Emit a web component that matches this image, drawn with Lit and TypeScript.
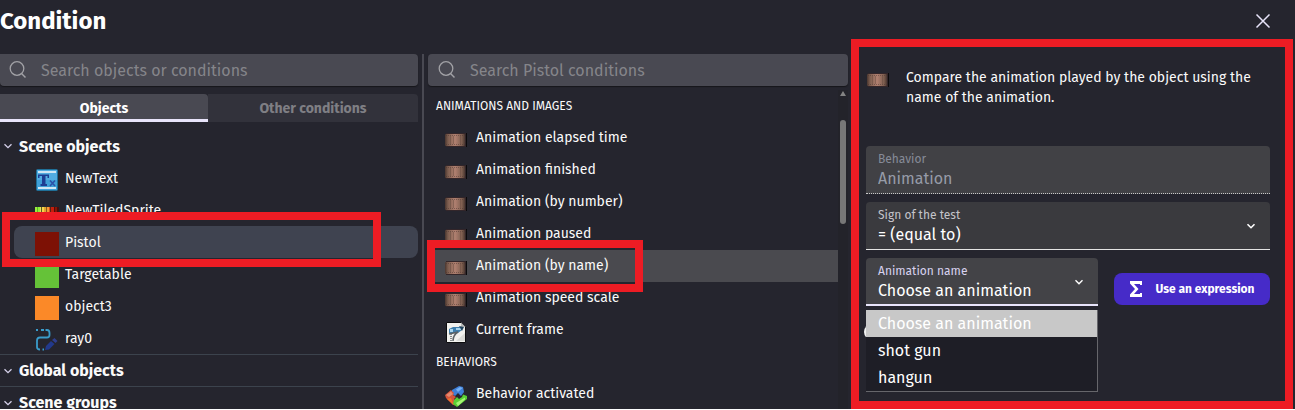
import { LitElement, html, css, svg, nothing } from "lit";
import { customElement, property, state } from "lit/decorators.js";
import { classMap } from "lit/directives/class-map.js";

const filmIcon = html`<svg width="24" height="24" viewBox="0 0 24 24" aria-hidden="true">
  <defs>
    <linearGradient id="film" x1="0" x2="1">
      <stop offset="0" stop-color="#4a362f" />
      <stop offset=".15" stop-color="#7d5e4f" />
      <stop offset=".5" stop-color="#b08070" />
      <stop offset=".85" stop-color="#7d5e4f" />
      <stop offset="1" stop-color="#49362f" />
    </linearGradient>
  </defs>
  <rect x="20" y="5" width="3" height="14" fill="#0b0a0b" />
  <path d="M2 5H22V19H2Z" fill="#33262a" />
  <rect x="1" y="6" width="20" height="12" rx="1" fill="url(#film)" />
  <path d="M2 7.500H21M2 16.500H21" stroke="#4c3430" stroke-width="1" stroke-dasharray="1 1" opacity=".5" fill="none" />
  <path d="M6.500 8V16M16.500 8V16M9.500 8V16" stroke="#5f453b" stroke-width="1" opacity=".4" />
</svg>`;

const frameIcon = html`<svg width="24" height="24" viewBox="0 0 24 24" aria-hidden="true">
  <path d="M2.500 2.500H17L21.500 7V22.500H2.500Z" fill="#f1f1ee" stroke="#0c0c0e" />
  <path d="M17 2.500V7H21.500Z" fill="#b9bab9" />
  <path d="M5 9L9 7H18V10L14 13H5Z" fill="#3f7fae" />
  <path d="M6 9H9V12H6ZM12 8H17V10H12Z" fill="#a8d5ee" />
  <path d="M15 6L20 7L18 11Z" fill="#23455f" />
  <path d="M5 14L14 12Q9 15 9 21" fill="none" stroke="#5b6266" stroke-width="1.500" />
  <path d="M7 14V22" stroke="#85898a" stroke-dasharray="1 1" stroke-width="2" />
  <path d="M12 21L21 13V21Z" fill="#d9dad7" />
</svg>`;

const puzzleIcon = html`<svg width="24" height="24" viewBox="0 0 24 24" aria-hidden="true">
  <path d="M8 6L15 2L19 3L20 8L17 12L14 9L11 12L8 10Z" fill="#3f7fd8" />
  <path d="M12 5.500L16 3L18.500 4L14 8Z" fill="#76b1f3" />
  <path d="M1 11L7 6L10 9L9 11L12 13L10 15L12 18L9 21L2 14Z" fill="#d5553d" />
  <path d="M2 11L7 7.500L9 10L5 13Z" fill="#e38a70" />
  <path d="M3 15L7 14L9 19L11 22Z" fill="#f2732b" />
  <path d="M10 16L13 13L15 15L18 13L19 10.500L23 12V15L13 23L9 20Z" fill="#57cf35" />
  <path d="M12 19L21 13.500V15.500L14 22Z" fill="#a6f474" />
</svg>`;

const textIcon = html`<svg width="24" height="24" viewBox="0 0 24 24" aria-hidden="true">
  <rect x="1.500" y="1.500" width="21" height="21" rx="1" fill="#3fa0d8" stroke="#1f6f97" />
  <path d="M2 2H22V12H2Z" fill="#63b7e9" opacity=".5" />
  <path d="M3 4H21M3 20H21" stroke="#cfe6f3" stroke-width="2" />
  <path d="M3 6.500H14V10H12.500V8H10.500V16H12V18H5.500V16H7V8H4.500V10H3Z" fill="#1d3e92" />
  <path d="M15 12.500L20 18M20 12.500L15 18" stroke="#2c51a8" stroke-width="1.600" />
</svg>`;

const stripes: [string, number][] = [
  ["#9bf03c", 2], ["#62b928", 1], ["#8ff03a", 2], ["#e9e05a", 1], ["#5e5a26", 1], ["#f5d64a", 2],
  ["#e3a532", 2], ["#8d5a1e", 1], ["#f79a33", 2], ["#d9531f", 1], ["#5a1f12", 1], ["#c41f0d", 3],
  ["#4e0f0b", 1], ["#8c1407", 2], ["#4a0f0c", 2],
];

const tiledIcon = html`<svg width="24" height="24" viewBox="0 0 24 24" shape-rendering="crispEdges" aria-hidden="true">
  ${stripes.map(([c, w], i) => {
    const x = stripes.slice(0, i).reduce((a, s) => a + s[1], 0);
    return svg`<rect x=${x} y="7" width=${w} height="10" fill=${c} />`;
  })}
</svg>`;

const rayIcon = html`<svg width="24" height="24" viewBox="0 0 24 24" aria-hidden="true">
  <path d="M1 2H3M6 2H9M10.500 2H12Q14.500 2 14.500 5V7Q14.500 9.500 12 9.500H5Q2 9.500 2 12.500V19Q2 21.500 5 21.500" fill="none" stroke="#3a9ccb" stroke-width="1.800" />
  <path d="M7.500 21.500H9" stroke="#3a9ccb" stroke-width="1.800" />
  <path d="M10 22L11 18L16 13L19.500 16L14 21.500Z" fill="#22398c" />
  <path d="M17 12L19.500 10L22.500 13L20.500 15Z" fill="#2f3f8e" />
</svg>`;

const swatch = (c: string) => html`<svg width="24" height="24" viewBox="0 0 24 24" aria-hidden="true"><rect width="24" height="24" fill=${c} /></svg>`;

const chevron = (size: number, width: number) => html`<svg width=${size} height=${size} viewBox="0 0 10 10" aria-hidden="true">
  <path d="M1.500 3.200L5 6.700L8.500 3.200" fill="none" stroke="currentColor" stroke-width=${width} />
</svg>`;

const shared = css`
  * { box-sizing: border-box; }
  :host { display: block; min-width: 0; }
  button, input, select { font: inherit; color: inherit; border: 0; margin: 0; padding: 0; background: none; outline: 0; }
  svg { flex: none; display: block; }
`;

@customElement("search-box")
class SearchBox extends LitElement {
  @property() placeholder = "";
  static styles = [shared, css`
    .box { display: flex; align-items: center; height: 32px; gap: 14px; padding: 0 10px; background: #494952; border-radius: 4px; box-shadow: 0 1px 1px #17171b; color: #a2a2a6; }
    :host([flush]) .box { padding-left: 9px; border-radius: 0 4px 4px 4px; }
    input { flex: 1; min-width: 0; font-size: 16px; height: 32px; }
    input::placeholder { color: #85858a; opacity: 1; }
  `];
  render() {
    return html`<label class="box">
      <svg width="18" height="18" viewBox="0 0 18 18" aria-hidden="true">
        <circle cx="8" cy="7.500" r="6.800" fill="none" stroke="currentColor" stroke-width="1.300" />
        <path d="M12.500 12.500L16.500 16.500" stroke="currentColor" stroke-width="1.500" />
      </svg>
      <input type="search" placeholder=${this.placeholder} aria-label=${this.placeholder} />
    </label>`;
  }
}

@customElement("objects-panel")
class ObjectsPanel extends LitElement {
  @state() private selected = "Pistol";
  private objects = [
    { name: "NewText", icon: textIcon },
    { name: "NewTiledSprite", icon: tiledIcon },
    { name: "Pistol", icon: swatch("#7d1105") },
    { name: "Targetable", icon: swatch("#65c238") },
    { name: "object3", icon: swatch("#fb8928") },
    { name: "ray0", icon: rayIcon },
  ];
  static styles = [shared, css`
    .tabs { display: grid; grid-template-columns: 208fr 210fr; margin: 8px 0; }
    .tab { height: 28px; font-size: 14px; font-weight: 700; color: #7f7f84; background: #32323b; border-radius: 0 4px 0 0; }
    .tab.active { color: #fff; background: #494952; border-bottom: 3px solid #e8e4fa; padding-top: 3px; }
    .group { display: flex; align-items: center; gap: 6px; width: 100%; height: 32px; padding-left: 3px; font-size: 16px; font-weight: 700; color: #fafafa; text-align: left; }
    .group svg { color: #d5d0ea; }
    .group.ruled { border-top: 1px solid #3c434d; }
    .item { position: relative; height: 32px; margin-left: 14px; border-radius: 8px; }
    .item.selected { background: #3f4350; }
    .pick { display: flex; align-items: center; gap: 6px; width: 100%; height: 32px; padding-left: 21px; font-size: 14px; color: #fafafa; text-align: left; }
    .pick svg { margin-top: 4px; }
    .mark { position: absolute; z-index: 2; left: -12px; top: -14px; width: 379px; height: 55px; border: 8px solid #ed1c24; pointer-events: none; }
  `];
  render() {
    return html`
      <search-box flush placeholder="Search objects or conditions"></search-box>
      <div class="tabs" role="tablist">
        <button class="tab active" role="tab" aria-selected="true">Objects</button>
        <button class="tab" role="tab" aria-selected="false">Other conditions</button>
      </div>
      <button class="group">${chevron(10, 1.3)}Scene objects</button>
      ${this.objects.map((o) => html`
        <div class=${classMap({ item: true, selected: o.name === this.selected })}>
          <button class="pick" @click=${() => (this.selected = o.name)}>${o.icon}${o.name}</button>
          ${o.name === "Pistol" ? html`<div class="mark"></div>` : nothing}
        </div>`)}
      <button class="group ruled">${chevron(10, 1.3)}Global objects</button>
      <button class="group ruled">${chevron(10, 1.3)}Scene groups</button>
    `;
  }
}

@customElement("conditions-panel")
class ConditionsPanel extends LitElement {
  @state() private selected = "Animation (by name)";
  private sections = [
    {
      title: "ANIMATIONS AND IMAGES",
      items: [
        ["Animation elapsed time", filmIcon], ["Animation finished", filmIcon], ["Animation (by number)", filmIcon],
        ["Animation paused", filmIcon], ["Animation (by name)", filmIcon], ["Animation speed scale", filmIcon],
        ["Current frame", frameIcon],
      ] as [string, unknown][],
    },
    { title: "BEHAVIORS", items: [["Behavior activated", puzzleIcon]] as [string, unknown][] },
  ];
  static styles = [shared, css`
    .scroller { display: flex; padding-top: 4px; }
    .list { flex: 1; min-width: 0; }
    .title { height: 32px; line-height: 32px; padding-left: 8px; font-size: 12px; color: #fafafa; }
    .item { position: relative; height: 32px; }
    .item.selected { background: #4a4a4f; }
    .pick { display: flex; align-items: center; gap: 8px; width: 100%; height: 32px; padding: 0 0 2px 16px; font-size: 14px; color: #fafafa; text-align: left; }
    .pick svg { margin-top: 5px; }
    .mark { position: absolute; z-index: 2; left: -1px; top: -10px; width: 216px; height: 52px; border: 8px solid #ed1c24; pointer-events: none; }
    .bar { display: flex; flex-direction: column; align-items: center; width: 10px; padding-top: 1px; background: #23232a; }
    .arrow { width: 0; border: 3px solid transparent; border-top: 0; border-bottom: 5px solid #838383; }
    .thumb { width: 6px; height: 104px; margin-top: 24px; border-radius: 3px; background: #777; }
  `];
  render() {
    return html`
      <search-box placeholder="Search Pistol conditions"></search-box>
      <div class="scroller">
        <div class="list">
          ${this.sections.map((s) => html`
            <div class="title">${s.title}</div>
            ${s.items.map(([name, icon]) => html`
              <div class=${classMap({ item: true, selected: name === this.selected })}>
                <button class="pick" @click=${() => (this.selected = name)}>${icon}${name}</button>
                ${name === "Animation (by name)" ? html`<div class="mark"></div>` : nothing}
              </div>`)}
          `)}
        </div>
        <div class="bar"><div class="arrow"></div><div class="thumb"></div></div>
      </div>
    `;
  }
}

@customElement("parameters-panel")
class ParametersPanel extends LitElement {
  private options = ["Choose an animation", "shot gun", "hangun"];
  static styles = [shared, css`
    .intro { display: flex; align-items: flex-start; gap: 16px; height: 80px; margin: 12px 0 0; font-size: 14px; line-height: 20px; color: #fafafa; }
    .intro svg { margin-top: 2px; }
    .intro p { margin: 2px 0 0; }
    .form { display: grid; gap: 8px; }
    .field { position: relative; height: 48px; background: #3a3a3e; border-radius: 4px 4px 0 0; border-bottom: 1px solid #e4e4e4; }
    .field label { display: block; padding: 4px 12px 0; font-size: 12px; line-height: 18px; color: #c4c4ca; }
    .field input, .field select { display: block; width: 100%; height: 21px; padding: 0 12px; font-size: 16px; appearance: none; color: #fff; }
    .field .chev { position: absolute; right: 14px; top: 19px; color: #fff; }
    .field.disabled { background: #414145; border-bottom: 1px dotted #c8c8c8; }
    .field.disabled label { color: #868b98; }
    .field.disabled input { color: #969ba8; }
    .field.active { background: #434347; border-bottom: 2px solid #e8e4fa; }
    .field.active label { color: #d8d2ef; }
    .row { display: grid; grid-template-columns: 232fr 156fr; gap: 16px; align-items: start; }
    .name { position: relative; }
    .expr { display: flex; align-items: center; justify-content: center; gap: 12px; height: 32px; margin-top: 15px; border-radius: 8px; background: #462bc8; color: #fff; font-size: 12px; font-weight: 700; white-space: nowrap; }
    .hint { position: absolute; left: -2px; top: 66px; width: 16px; height: 16px; border-radius: 8px; background: #f2f2f2; }
    .popup { position: absolute; z-index: 1; left: 0; right: 0; top: 52px; margin: 0; padding: 0; list-style: none; background: #1e1e26; border: solid #66666b; border-width: 0 1px 1px 0; font-size: 16px; color: #fff; }
    .option { height: 27px; line-height: 28px; padding: 0 12px; }
    .option.hover { background: #c8c8c8; }
  `];
  render() {
    return html`
      <div class="intro">${filmIcon}<p>Compare the animation played by the object using the name of the animation.</p></div>
      <div class="form">
        <div class="field disabled"><label for="behavior">Behavior</label><input id="behavior" disabled value="Animation" /></div>
        <div class="field">
          <label for="sign">Sign of the test</label>
          <select id="sign"><option>= (equal to)</option></select>
          <span class="chev">${chevron(10, 1.6)}</span>
        </div>
        <div class="row">
          <div class="name">
            <div class="field active">
              <label for="animation">Animation name</label>
              <select id="animation">${this.options.map((o) => html`<option>${o}</option>`)}</select>
              <span class="chev">${chevron(10, 1.4)}</span>
            </div>
            <span class="hint"></span>
            <ul class="popup" role="listbox" aria-label="Animation name">
              ${this.options.map((o, i) => html`<li class=${classMap({ option: true, hover: i === 0 })} role="option">${o}</li>`)}
            </ul>
          </div>
          <button class="expr">
            <svg width="14" height="16" viewBox="0 0 14 16" aria-hidden="true"><path d="M1 0H13V4H11V3H5L9.500 8L5 13H11V12H13V16H1V13.500L6 8L1 2.500Z" fill="currentColor" /></svg>
            Use an expression
          </button>
        </div>
      </div>
    `;
  }
}

@customElement("app-root")
class AppRoot extends LitElement {
  static styles = [shared, css`
    :host { display: flex; flex-direction: column; height: 100vh; overflow: hidden; background: #25252e; border-bottom: 1px solid #fff; box-sizing: border-box; font-family: "Fira Sans", "Noto Sans", "Open Sans", sans-serif; color: #fafafa; }
    .header { display: flex; flex: none; justify-content: space-between; align-items: center; height: 42px; margin-bottom: 12px; padding-right: 24px; }
    h1 { margin: 0; font-size: 24px; line-height: 42px; font-weight: 700; color: #fff; }
    .close { display: grid; place-items: center; width: 16px; height: 16px; color: #e8e4fa; }
    .body { flex: 1; min-height: 0; display: grid; grid-template-columns: 422fr 2px 424fr 447fr; grid-template-rows: minmax(0, 1fr); }
    .divider { background: #494952; }
    objects-panel { margin-right: 4px; }
    conditions-panel { margin-left: 4px; }
    .right { position: relative; padding: 0 25px 0 18px; }
    .mark { position: absolute; left: 3px; right: 2px; top: -15px; bottom: 0; border: 8px solid #ed1c24; pointer-events: none; }
  `];
  render() {
    return html`
      <header class="header">
        <h1>Condition</h1>
        <button class="close" aria-label="Close">
          <svg width="16" height="16" viewBox="0 0 16 16"><path d="M1.500 1.500L14.500 14.500M14.500 1.500L1.500 14.500" stroke="currentColor" stroke-width="1.500" /></svg>
        </button>
      </header>
      <main class="body">
        <objects-panel></objects-panel>
        <div class="divider"></div>
        <conditions-panel></conditions-panel>
        <section class="right"><parameters-panel></parameters-panel><div class="mark"></div></section>
      </main>
    `;
  }
}
